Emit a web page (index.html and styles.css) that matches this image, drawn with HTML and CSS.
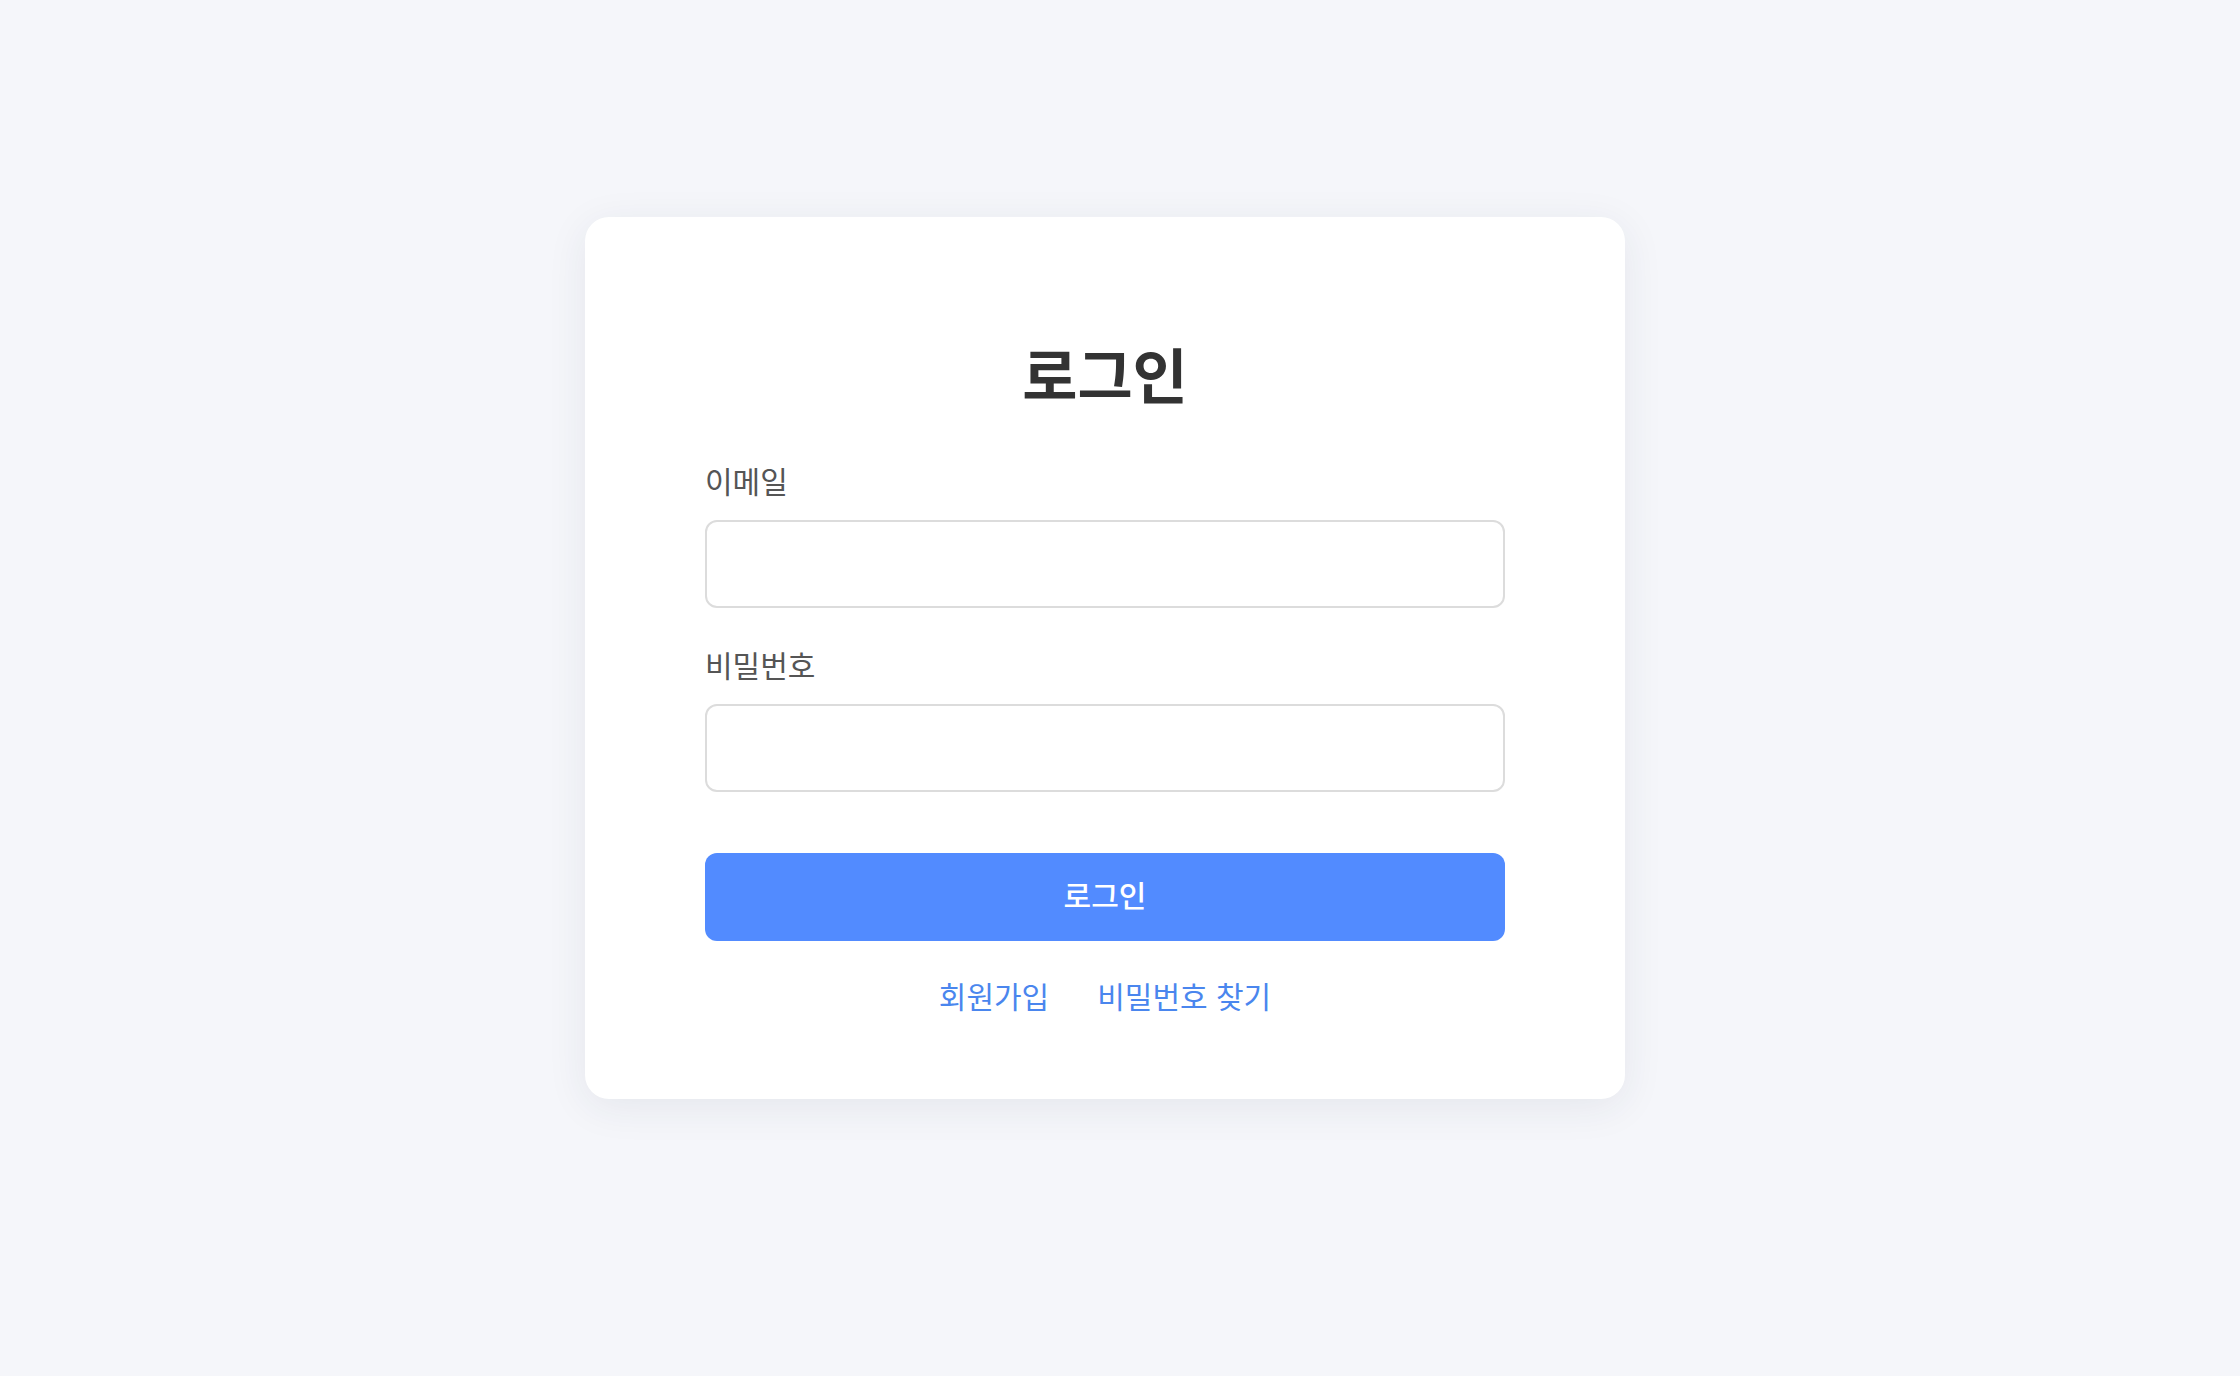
FILE: index.html
```html
<!DOCTYPE html>
<html lang="ko">
<head>
<meta charset="UTF-8" />
<meta name="viewport" content="width=device-width, initial-scale=1" />
<title>로그인</title>
<link rel="stylesheet" href="styles.css">
</head>
<body>

<main class="page">
  <form class="login-card" onsubmit="return false;">
    <h1 class="login-title">로그인</h1>

    <label class="field-label" for="email">이메일</label>
    <input class="field-input" id="email" type="email" />

    <label class="field-label" for="password">비밀번호</label>
    <input class="field-input" id="password" type="password" />

    <button class="login-btn" type="submit">로그인</button>

    <div class="login-links">
      <a href="#">회원가입</a>
      <a href="#">비밀번호 찾기</a>
    </div>
  </form>
</main>

</body>
</html>
```

FILE: styles.css
```css
body {
  margin: 0;
  background-color: #f5f6fa;
  font-family: "Noto Sans CJK KR", "Noto Sans", sans-serif;
  color: #333;
}
.page {
  display: flex;
  justify-content: center;
  align-items: flex-start;
  padding: 217px 30px 0 0;
  min-height: 1159px;
}
.login-card {
  width: 1040px;
  box-sizing: border-box;
  background: #fff;
  border-radius: 24px;
  padding: 116px 120px 84px;
  box-shadow: 0 8px 40px rgba(40, 50, 80, 0.08);
  display: flex;
  flex-direction: column;
}
.login-title {
  margin: 0 0 47px;
  text-align: center;
  font-size: 60px;
  line-height: 80px;
  font-weight: 700;
  color: #333;
}
.field-label {
  display: block;
  font-size: 30px;
  line-height: 40px;
  color: #555;
  margin-bottom: 20px;
}
.field-input {
  height: 88px;
  box-sizing: border-box;
  border: 2px solid #dcdcdc;
  border-radius: 12px;
  padding: 0 24px;
  font-size: 28px;
  font-family: inherit;
  background: #fff;
  margin-bottom: 36px;
}
.field-input:focus {
  outline: none;
  border-color: #528bff;
}
.field-input + .login-btn {
  margin-top: 25px;
}
.login-btn {
  height: 88px;
  padding: 0 0 6px;
  border: none;
  border-radius: 12px;
  background-color: #528bff;
  color: #fff;
  font-family: inherit;
  font-size: 30px;
  font-weight: 500;
  cursor: pointer;
}
.login-links {
  margin-top: 34px;
  display: flex;
  justify-content: center;
  gap: 48px;
  font-size: 30px;
  line-height: 40px;
}
.login-links a {
  color: #4a86ee;
  text-decoration: none;
}
.login-links a:hover {
  text-decoration: underline;
}
```
